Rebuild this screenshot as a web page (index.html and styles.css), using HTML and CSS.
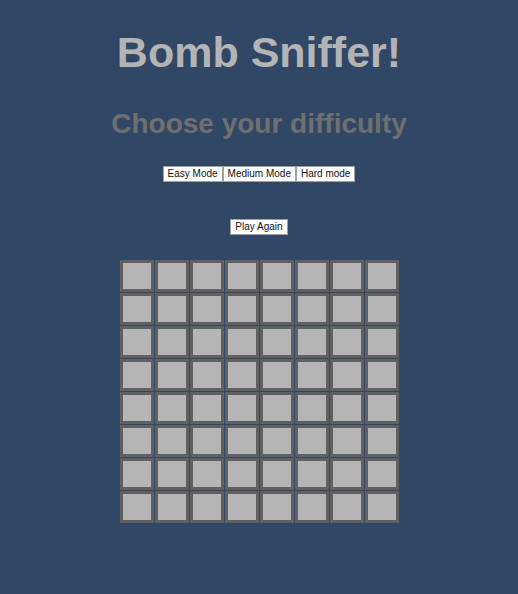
FILE: index.html
```html
<!DOCTYPE html>
<html>
<head>
<meta charset="utf-8">
<link rel="stylesheet" href="styles.css">
</head>
<body>
<h1 class="title">Bomb Sniffer!</h1>
<h2 class="subtitle">Choose your difficulty</h2>
<div class="modes">
  <button class="btn">Easy Mode</button><button class="btn">Medium Mode</button><button class="btn">Hard mode</button>
</div>
<div class="again">
  <button class="btn">Play Again</button>
</div>
<div class="board" id="board"></div>
<script src="script.js"></script>
</body>
</html>
```
FILE: styles.css
```css
html, body {
  margin: 0;
  padding: 0;
  background: #304766;
  height: 100%;
}
body {
  font-family: "Liberation Sans", Arial, sans-serif;
  text-align: center;
  padding-top: 1px;
}
.title {
  margin: 26px 0 0;
  font-size: 43px;
  line-height: 50px;
  font-weight: bold;
  color: #b4b4b4;
}
.subtitle {
  margin: 30px 0 0;
  font-size: 28px;
  line-height: 33px;
  font-weight: bold;
  color: #6f6f6f;
}
.modes {
  margin-top: 26px;
  display: flex;
  justify-content: center;
}
.again {
  margin-top: 37px;
  display: flex;
  justify-content: center;
}
.btn {
  font-family: "Liberation Sans", Arial, sans-serif;
  font-size: 10px;
  line-height: 12px;
  height: 16px;
  padding: 0 4px;
  background: #ffffff;
  color: #111;
  border: 1px solid #a0a0a0;
  margin: 0;
}
.board {
  margin: 25px auto 0;
  width: 279px;
  display: grid;
  grid-template-columns: repeat(8, 34px);
  grid-auto-rows: 32px;
  gap: 1px;
}
.cell {
  box-sizing: border-box;
  background: #b5b5b5;
  border: 3px solid #606060;
}
```
FILE: script.js
```js
const board = document.getElementById('board');
for (let i = 0; i < 64; i++) {
  const c = document.createElement('div');
  c.className = 'cell';
  board.appendChild(c);
}
```
